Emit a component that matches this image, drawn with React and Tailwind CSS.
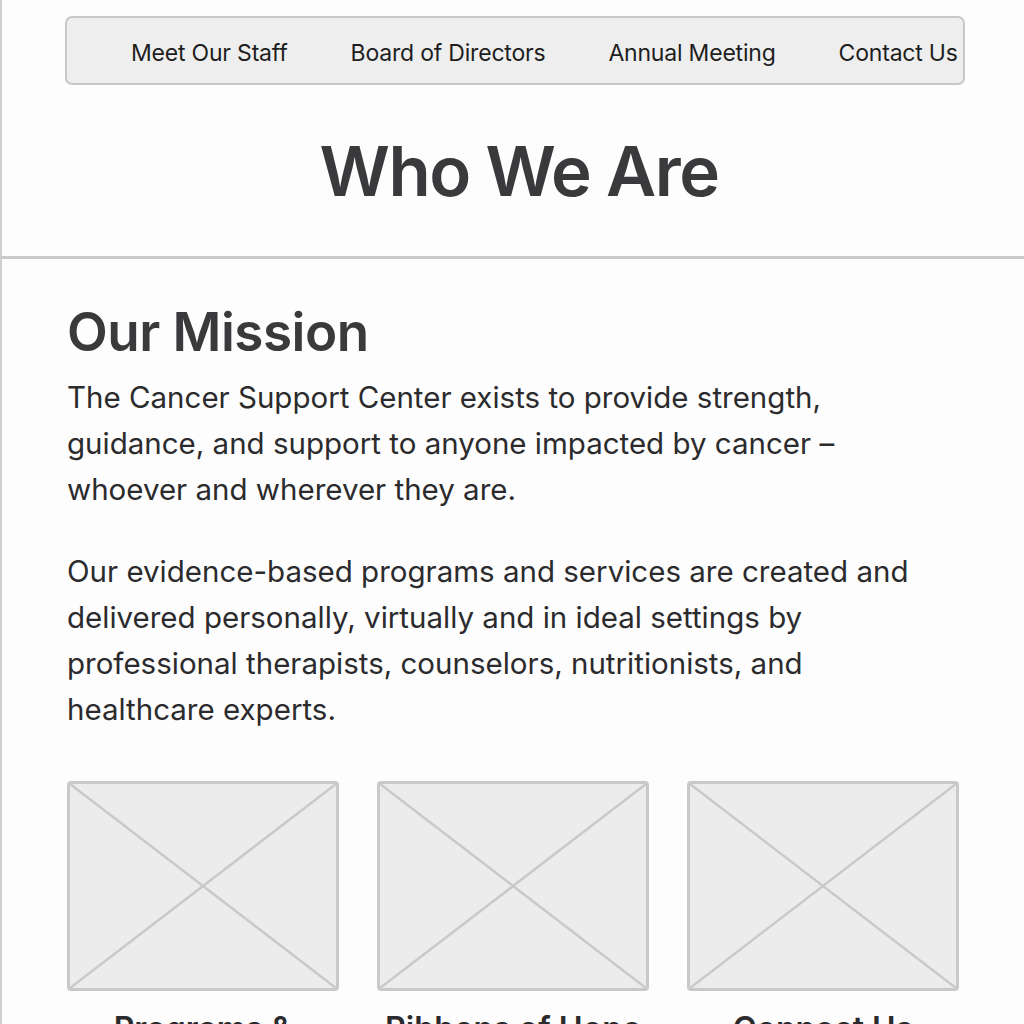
import React from "react";

const NAV = ["Meet Our Staff", "Board of Directors", "Annual Meeting", "Contact Us"];
const CARDS = ["Programs &", "Ribbons of Hope", "Connect Us"];

function Placeholder() {
  return (
    <div className="h-[210px] rounded-[4px] border-[3px] border-[#c9c9c9] bg-[#ececec] overflow-hidden">
      <svg viewBox="0 0 100 100" preserveAspectRatio="none" className="w-full h-full">
        <line x1="0" y1="0" x2="100" y2="100" stroke="#c9c9c9" strokeWidth="2.5" vectorEffect="non-scaling-stroke" />
        <line x1="100" y1="0" x2="0" y2="100" stroke="#c9c9c9" strokeWidth="2.5" vectorEffect="non-scaling-stroke" />
      </svg>
    </div>
  );
}

export default function App() {
  return (
    <div className="h-[1024px] overflow-hidden bg-[#fdfdfd] border-l-2 border-[#cfcfcf] font-['Inter',sans-serif] text-[#2b2b2d]">
      <div className="pt-4 pl-[63px] pr-[59px]">
        <nav className="h-[69px] rounded-[7px] border-2 border-[#c8c8c8] bg-[#eeeeee] flex items-center pt-[6px] pl-[64px] gap-[63px] text-[23px] text-[#1e1e1e] tracking-[-0.2px] overflow-hidden">
          {NAV.map((item) => (
            <span key={item} className="whitespace-nowrap">{item}</span>
          ))}
        </nav>
      </div>

      <h1 className="mt-[52px] text-center text-[69px] leading-none font-semibold text-[#3a3a3d] tracking-[-1.5px] pl-[12px]">
        Who We Are
      </h1>

      <div className="mt-[50px] border-t-[3px] border-[#cacaca]" />

      <main className="pl-[65px] pr-[65px]">
        <h2 className="mt-[47px] text-[53px] leading-none font-semibold text-[#3a3a3d] tracking-[-0.5px]">
          Our Mission
        </h2>
        <p className="mt-[15px] text-[29.5px] leading-[46px] w-[852px]">
          The Cancer Support Center exists to provide strength, guidance, and support to anyone impacted by cancer – whoever and wherever they are.
        </p>
        <p className="mt-[36px] text-[29.5px] leading-[46px] w-[852px]">
          Our evidence-based programs and services are created and delivered personally, virtually and in ideal settings by professional therapists, counselors, nutritionists, and healthcare experts.
        </p>

        <div className="mt-[49px] grid grid-cols-3 gap-[38px] w-[892px]">
          {CARDS.map((c) => (
            <div key={c}>
              <Placeholder />
              <h3 className="mt-[22px] text-center text-[32px] leading-none font-semibold text-[#2b2b2d] whitespace-nowrap">{c}</h3>
            </div>
          ))}
        </div>
      </main>
    </div>
  );
}
